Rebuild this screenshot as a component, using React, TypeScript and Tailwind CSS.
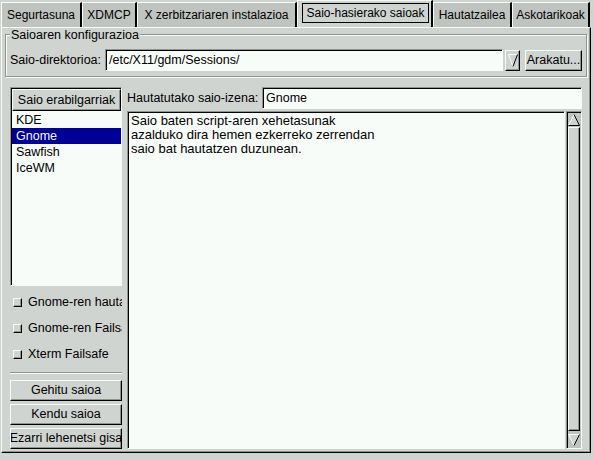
import React from "react";

const raised =
  "border border-t-[#f8fcf8] border-l-[#f8fcf8] border-r-black border-b-black shadow-[inset_-1px_-1px_0_#909490]";
const sunken =
  "border border-t-[#909490] border-l-[#909490] border-r-[#f8fcf8] border-b-[#f8fcf8] shadow-[inset_1px_1px_0_#000]";

function Tab({ label, width }: { label: string; width: string }) {
  return (
    <div
      className={`${width} h-[25px] bg-[#c0c4c0] border-t border-l border-r-2 border-t-[#f8fcf8] border-l-[#f8fcf8] border-r-black flex items-center justify-center text-[12px] whitespace-nowrap overflow-hidden`}
    >
      {label}
    </div>
  );
}

function ActiveTab({ label }: { label: string }) {
  return (
    <div className="w-[136px] h-[27px] bg-[#d0d4d0] border-t border-l border-r-2 border-t-[#f8fcf8] border-l-[#f8fcf8] border-r-black pl-[4px] pr-[2px] pt-[2px] pb-[4px] flex">
      <div className="flex-1 border border-black flex items-center justify-center text-[12px] whitespace-nowrap overflow-hidden">
        {label}
      </div>
    </div>
  );
}

function ArrowUp() {
  return (
    <svg width="12" height="12" viewBox="0 0 12 12">
      <polygon points="6,0.5 11.5,11.5 0.5,11.5" fill="#d0d4d0" />
      <polyline points="0.5,11.5 6,0.5" stroke="#f8fcf8" fill="none" />
      <polyline points="6,0.5 11.5,11.5 0.5,11.5" stroke="#000" fill="none" />
    </svg>
  );
}

function ArrowDown({ w = 12, h = 12 }: { w?: number; h?: number }) {
  return (
    <svg width={w} height={h} viewBox={`0 0 ${w} ${h}`}>
      <polygon points={`0.5,0.5 ${w - 0.5},0.5 ${w / 2},${h - 0.5}`} fill="#d0d4d0" />
      <polyline points={`${w / 2},${h - 0.5} 0.5,0.5 ${w - 0.5},0.5`} stroke="#f8fcf8" fill="none" />
      <polyline points={`${w - 0.5},0.5 ${w / 2},${h - 0.5}`} stroke="#000" fill="none" />
    </svg>
  );
}

function Check({ label }: { label: string }) {
  return (
    <div className="h-[26px] flex items-center whitespace-nowrap overflow-hidden">
      <div className={`ml-[3px] w-[9px] h-[9px] shrink-0 bg-[#d0d4d0] ${raised}`} />
      <span className="ml-[6px]">{label}</span>
    </div>
  );
}

function Button({ label }: { label: string }) {
  return (
    <div
      className={`h-[21px] w-full bg-[#d0d4d0] ${raised} flex items-center justify-center whitespace-nowrap overflow-hidden`}
    >
      <span className="shrink-0">{label}</span>
    </div>
  );
}

export default function App() {
  const sessions = ["KDE", "Gnome", "Sawfish", "IceWM"];
  return (
    <div className="w-[593px] h-[459px] bg-[#d0d4d0] font-['Liberation_Sans',Arial,sans-serif] text-[12.5px] text-black leading-none overflow-hidden select-none">
      {/* tab strip */}
      <div className="flex items-end h-[27px] pl-[1px]">
        <Tab label="Segurtasuna" width="w-[81px]" />
        <Tab label="XDMCP" width="w-[55px]" />
        <Tab label="X zerbitzariaren instalazioa" width="w-[160px]" />
        <ActiveTab label="Saio-hasierako saioak" />
        <Tab label="Hautatzailea" width="w-[79px]" />
        <Tab label="Askotarikoak" width="w-[78px]" />
      </div>

      {/* notebook page */}
      <div className="ml-[1px] w-[590px] h-[426px] border border-t-[#f8fcf8] border-l-[#f8fcf8] border-r-black border-b-black shadow-[inset_-1px_-1px_0_#909490] pt-[6px] pl-[3px] pr-[3px]">
        {/* frame */}
        <div className="relative border border-[#909490] shadow-[inset_1px_1px_0_#f8fcf8,1px_1px_0_#f8fcf8] pt-[14px] pb-[5px] pl-[4px] pr-[3px]">
          <div className="absolute top-[-7px] left-[4px] bg-[#d0d4d0] px-[1px] leading-[14px]">
            Saioaren konfigurazioa
          </div>
          <div className="flex items-center h-[22px]">
            <div className="w-[95px] shrink-0">Saio-direktorioa:</div>
            <div className={`w-[398px] h-[22px] bg-[#f8fcf8] ${sunken} flex items-center pl-[3px]`}>
              /etc/X11/gdm/Sessions/
            </div>
            <div className={`ml-[2px] w-[15px] h-[21px] bg-[#d0d4d0] ${raised} flex items-center justify-center`}>
              <ArrowDown w={10} h={13} />
            </div>
            <div className={`ml-[5px] w-[57px] h-[21px] bg-[#d0d4d0] ${raised} flex items-center justify-center whitespace-nowrap`}>
              Arakatu...
            </div>
          </div>
        </div>

        {/* sessions area */}
        <div className="flex mt-[10px] ml-[5px]">
          {/* left column */}
          <div className="w-[112px] flex flex-col">
            <div className={`h-[199px] bg-[#f8fcf8] ${sunken} pt-[1px] pl-[1px]`}>
              <div className={`h-[22px] bg-[#d0d4d0] ${raised} flex items-center justify-center whitespace-nowrap`}>
                Saio erabilgarriak
              </div>
              <div className="mt-[1px]">
                {sessions.map((s) => (
                  <div
                    key={s}
                    className={`h-[16px] pl-[4px] flex items-center ${
                      s === "Gnome" ? "bg-[#000098] text-[#f8fcf8]" : ""
                    }`}
                  >
                    {s}
                  </div>
                ))}
              </div>
            </div>
            <div className="mt-[3px]">
              <Check label="Gnome-ren hautatzailea" />
              <Check label="Gnome-ren Failsafe" />
              <Check label="Xterm Failsafe" />
            </div>
            <div className="mt-[5px] h-[2px] border-t border-t-[#909490] border-b border-b-[#f8fcf8]" />
            <div className="mt-[6px] flex flex-col gap-[3px]">
              <Button label="Gehitu saioa" />
              <Button label="Kendu saioa" />
              <Button label="Ezarri lehenetsi gisa" />
            </div>
          </div>

          {/* right column */}
          <div className="ml-[5px] w-[455px] flex flex-col">
            <div className="flex items-center h-[22px]">
              <div className="w-[135px] shrink-0 whitespace-nowrap">Hautatutako saio-izena:</div>
              <div className={`flex-1 h-[22px] bg-[#f8fcf8] ${sunken} flex items-center pl-[3px]`}>Gnome</div>
            </div>
            <div className="mt-[2px] flex h-[338px]">
              <div className={`w-[438px] bg-[#f8fcf8] ${sunken} pl-[3px] pt-[2px] text-[13px] leading-[14px]`}>
                <div>Saio baten script-aren xehetasunak</div>
                <div>azalduko dira hemen ezkerreko zerrendan</div>
                <div>saio bat hautatzen duzunean.</div>
              </div>
              <div className={`ml-[1px] w-[16px] bg-[#c0c4c0] ${sunken} p-[1px] flex flex-col`}>
                <div className="h-[14px] flex items-start justify-center pt-[1px]">
                  <ArrowUp />
                </div>
                <div className={`flex-1 bg-[#d0d4d0] ${raised}`} />
                <div className="h-[16px] flex items-end justify-center pb-[1px]">
                  <ArrowDown />
                </div>
              </div>
            </div>
          </div>
        </div>
      </div>
    </div>
  );
}
